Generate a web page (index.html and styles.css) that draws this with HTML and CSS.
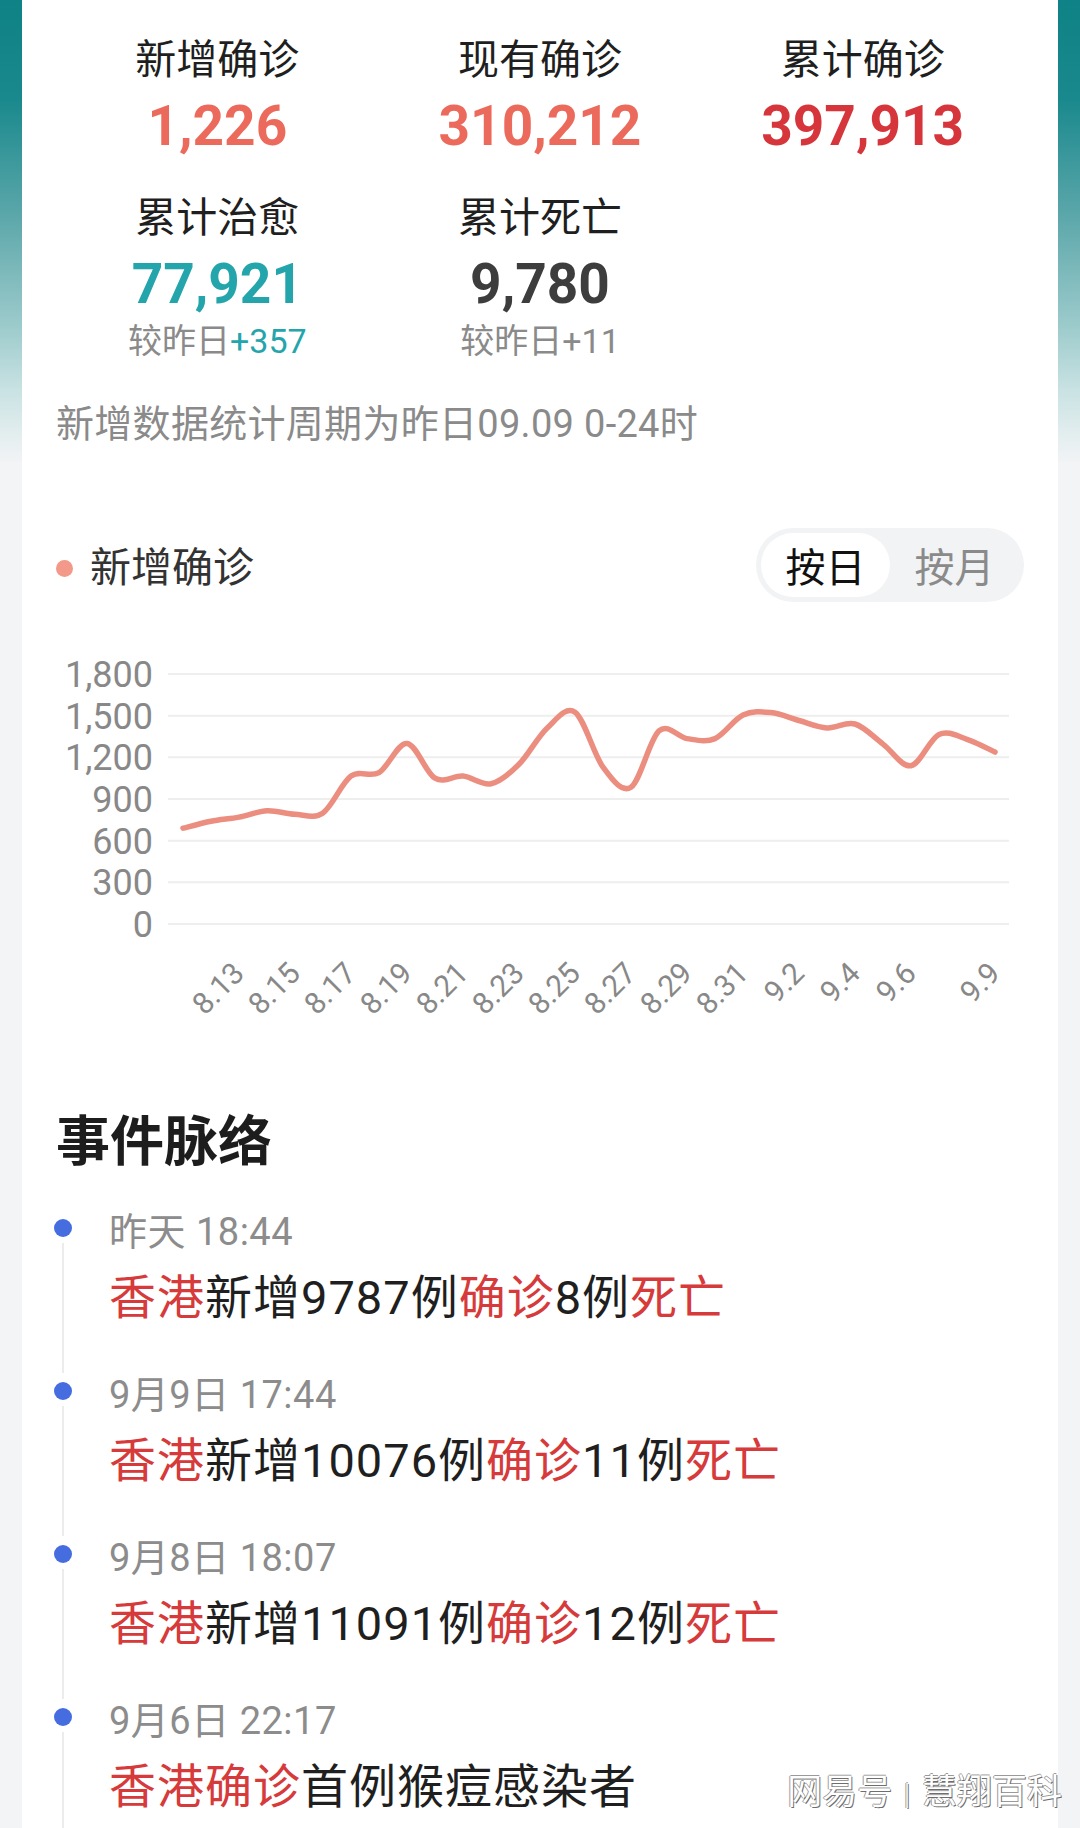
FILE: index.html
```html
<!DOCTYPE html>
<html lang="zh-CN">
<head>
<meta charset="utf-8">
<title>疫情数据</title>
<link rel="stylesheet" href="styles.css">
</head>
<body>
<main class="page">
  <section class="stats">
    <div class="stat">
      <div class="stat-label">新增确诊</div>
      <div class="stat-num c-coral">1,226</div>
    </div>
    <div class="stat">
      <div class="stat-label">现有确诊</div>
      <div class="stat-num c-coral">310,212</div>
    </div>
    <div class="stat">
      <div class="stat-label">累计确诊</div>
      <div class="stat-num c-red">397,913</div>
    </div>
    <div class="stat">
      <div class="stat-label">累计治愈</div>
      <div class="stat-num c-teal">77,921</div>
      <div class="stat-sub">较昨日<span class="c-teal">+357</span></div>
    </div>
    <div class="stat">
      <div class="stat-label">累计死亡</div>
      <div class="stat-num c-dark">9,780</div>
      <div class="stat-sub">较昨日+11</div>
    </div>
  </section>

  <p class="note">新增数据统计周期为昨日09.09 0-24时</p>

  <section class="chart">
    <div class="chart-head">
      <div class="legend"><span class="legend-dot"></span>新增确诊</div>
      <div class="toggle">
        <span class="toggle-btn active">按日</span>
        <span class="toggle-btn">按月</span>
      </div>
    </div>
    <svg class="chart-svg" width="966" height="380" viewBox="56 650 966 380" xmlns="http://www.w3.org/2000/svg">
      <g class="grid">
        <line x1="168" y1="674" x2="1009" y2="674"/>
        <line x1="168" y1="715.7" x2="1009" y2="715.7"/>
        <line x1="168" y1="757.3" x2="1009" y2="757.3"/>
        <line x1="168" y1="799" x2="1009" y2="799"/>
        <line x1="168" y1="840.7" x2="1009" y2="840.7"/>
        <line x1="168" y1="882.3" x2="1009" y2="882.3"/>
        <line x1="168" y1="924" x2="1009" y2="924"/>
      </g>
      <g class="ylabels">
        <text x="153" y="686.8">1,800</text>
        <text x="153" y="728.5">1,500</text>
        <text x="153" y="770.1">1,200</text>
        <text x="153" y="811.8">900</text>
        <text x="153" y="853.5">600</text>
        <text x="153" y="895.1">300</text>
        <text x="153" y="936.8">0</text>
      </g>
      <path class="series" d="M183,828.2 C187.67,827.03 201.67,823.05 211,821.2 S229.67,818.83 239,817.1 S257.67,811.27 267,810.8 S285.67,813.95 295,814.3 S313.67,819.27 323,812.9 S341.67,782.82 351,776.1 S369.67,778.05 379,772.6 S397.67,742.47 407,743.4 S425.67,772.75 435,778.2 S453.67,775.18 463,776.1 S481.67,785.67 491,783.7 S509.67,773.55 519,764.3 S537.67,736.88 547,728.2 S565.67,705.72 575,712.2 S593.67,754.6 603,767.1 S621.67,793.23 631,787.2 S649.67,739 659,730.9 S677.67,737.32 687,738.6 S705.67,742.53 715,738.6 S733.67,719.33 743,715 S761.67,711.68 771,712.6 S789.67,717.95 799,720.5 S817.67,727.32 827,727.9 S845.67,721.3 855,724 S873.67,737.15 883,744.1 S901.67,767.32 911,765.7 S929.67,738.8 939,734.4 S957.67,736.35 967,739.3 S990.33,749.97 995,752.1"/>
      <g class="xlabels">
        <text transform="translate(246 975) rotate(-45)">8.13</text>
        <text transform="translate(302 975) rotate(-45)">8.15</text>
        <text transform="translate(358 975) rotate(-45)">8.17</text>
        <text transform="translate(414 975) rotate(-45)">8.19</text>
        <text transform="translate(470 975) rotate(-45)">8.21</text>
        <text transform="translate(526 975) rotate(-45)">8.23</text>
        <text transform="translate(582 975) rotate(-45)">8.25</text>
        <text transform="translate(638 975) rotate(-45)">8.27</text>
        <text transform="translate(694 975) rotate(-45)">8.29</text>
        <text transform="translate(750 975) rotate(-45)">8.31</text>
        <text transform="translate(806 975) rotate(-45)">9.2</text>
        <text transform="translate(862 975) rotate(-45)">9.4</text>
        <text transform="translate(918 975) rotate(-45)">9.6</text>
        <text transform="translate(1002 975) rotate(-45)">9.9</text>
      </g>
    </svg>
  </section>

  <section class="events">
    <h2 class="events-title">事件脉络</h2>
    <ol class="timeline">
      <li class="tl-item">
        <div class="tl-rail"><span class="tl-dot"></span><span class="tl-line"></span></div>
        <div class="tl-body">
          <div class="tl-time">昨天 18:44</div>
          <div class="tl-text"><span class="hl">香港</span>新增9787例<span class="hl">确诊</span>8例<span class="hl">死亡</span></div>
        </div>
      </li>
      <li class="tl-item">
        <div class="tl-rail"><span class="tl-dot"></span><span class="tl-line"></span></div>
        <div class="tl-body">
          <div class="tl-time">9月9日 17:44</div>
          <div class="tl-text"><span class="hl">香港</span>新增10076例<span class="hl">确诊</span>11例<span class="hl">死亡</span></div>
        </div>
      </li>
      <li class="tl-item">
        <div class="tl-rail"><span class="tl-dot"></span><span class="tl-line"></span></div>
        <div class="tl-body">
          <div class="tl-time">9月8日 18:07</div>
          <div class="tl-text"><span class="hl">香港</span>新增11091例<span class="hl">确诊</span>12例<span class="hl">死亡</span></div>
        </div>
      </li>
      <li class="tl-item">
        <div class="tl-rail"><span class="tl-dot"></span><span class="tl-line"></span></div>
        <div class="tl-body">
          <div class="tl-time">9月6日 22:17</div>
          <div class="tl-text"><span class="hl">香港确诊</span>首例猴痘感染者</div>
        </div>
      </li>
    </ol>
  </section>
</main>
<div class="watermark">网易号 <span class="wm-sep">|</span> 慧翔百科</div>
</body>
</html>
```

FILE: styles.css
```css
* {
  box-sizing: border-box;
}

html,
body {
  height: 1828px;
  overflow: hidden;
}

body {
  margin: 0;
  position: relative;
  font-family: Roboto, "Noto Sans CJK SC", sans-serif;
  color: #222;
  background-color: #f3f4f6;
  background-image: linear-gradient(180deg,
      #0e8286 0px,
      #1a898d 100px,
      #5ea8ab 220px,
      #9fcccd 330px,
      #c9e2e3 390px,
      #e6eff0 440px,
      #f3f4f6 465px);
  background-repeat: no-repeat;
  background-size: 100% 465px;
}

.page {
  margin: 0 22px;
  min-height: 1828px;
  background: #fff;
  padding: 36px 34px 0;
}

/* ---------- stats ---------- */
.stats {
  display: grid;
  grid-template-columns: repeat(3, 1fr);
  row-gap: 35px;
}

.stat {
  display: flex;
  flex-direction: column;
  align-items: center;
}

.stat-label {
  font-size: 41px;
  line-height: 48px;
  color: #1f1f1f;
}

.stat-num {
  margin-top: 9px;
  font-size: 55px;
  line-height: 66px;
  font-weight: 700;
}

.stat-sub {
  margin-top: 4px;
  font-size: 34px;
  line-height: 40px;
  color: #8a8a8a;
}

.c-coral { color: #ec6a5b; }
.c-red { color: #d6363b; }
.c-teal { color: #24a5ab; }
.c-dark { color: #3d3d3d; }

.note {
  margin: 40px 0 0;
  font-size: 38px;
  line-height: 46px;
  letter-spacing: 0.3px;
  color: #8a8a8a;
}

/* ---------- chart ---------- */
.chart-head {
  margin-top: 81px;
  display: flex;
  align-items: center;
  justify-content: space-between;
  height: 74px;
}

.legend {
  display: flex;
  align-items: center;
  margin-top: 6px;
  font-size: 41px;
  line-height: 48px;
  color: #333;
}

.legend-dot {
  width: 17px;
  height: 17px;
  border-radius: 50%;
  background: #f3998a;
  margin: 0 17px 0 0;
}

.toggle {
  display: flex;
  width: 268px;
  height: 74px;
  padding: 5px;
  border-radius: 37px;
  background: #f1f3f5;
}

.toggle-btn {
  flex: 1;
  display: flex;
  align-items: center;
  justify-content: center;
  border-radius: 32px;
  font-size: 40px;
  color: #8a8a8a;
}

.toggle-btn.active {
  background: #fff;
  color: #111;
}

.chart-svg {
  display: block;
  margin-top: 48px;
}

.grid line {
  stroke: #eeeeee;
  stroke-width: 2;
}

.ylabels text {
  font-family: Roboto, sans-serif;
  font-size: 36px;
  fill: #888;
  text-anchor: end;
}

.xlabels text {
  font-family: Roboto, sans-serif;
  font-size: 30px;
  fill: #888;
  text-anchor: end;
}

.series {
  fill: none;
  stroke: #eb8e80;
  stroke-width: 5.5;
  stroke-linecap: round;
  stroke-linejoin: round;
}

/* ---------- events ---------- */
.events-title {
  margin: 82px 0 0;
  font-size: 54px;
  line-height: 62px;
  font-weight: 700;
  color: #1d1d1d;
}

.timeline {
  list-style: none;
  margin: 36px 0 0 -2px;
  padding: 0;
}

.tl-item {
  display: flex;
  height: 163px;
}

.tl-rail {
  width: 18px;
  display: flex;
  flex-direction: column;
  align-items: center;
  padding-top: 9px;
}

.tl-dot {
  width: 18px;
  height: 18px;
  border-radius: 50%;
  background: #456de0;
  flex: none;
}

.tl-line {
  flex: 1;
  width: 2px;
  margin-top: 6px;
  background: #ececec;
}

.tl-body {
  margin-left: 37px;
  display: flex;
  flex-direction: column;
}

.tl-time {
  font-size: 38px;
  line-height: 44px;
  letter-spacing: 0.5px;
  color: #8c8c8c;
}

.tl-text {
  margin-top: 16px;
  font-size: 47px;
  line-height: 56px;
  letter-spacing: 1px;
  color: #1f1f1f;
}

.hl {
  color: #d63a3a;
}

.watermark {
  position: absolute;
  right: 18px;
  top: 1766px;
  font-family: "Noto Sans CJK SC", sans-serif;
  font-size: 35px;
  line-height: 46px;
  color: #ffffff;
  text-shadow: 1px 1px 0 #6e6e6e, -1px 0 0 #9a9a9a, 0 -1px 0 #9a9a9a;
  white-space: nowrap;
}

.wm-sep {
  font-family: "Noto Sans", sans-serif;
  font-size: 26px;
  font-weight: 300;
  vertical-align: 2px;
}
```
